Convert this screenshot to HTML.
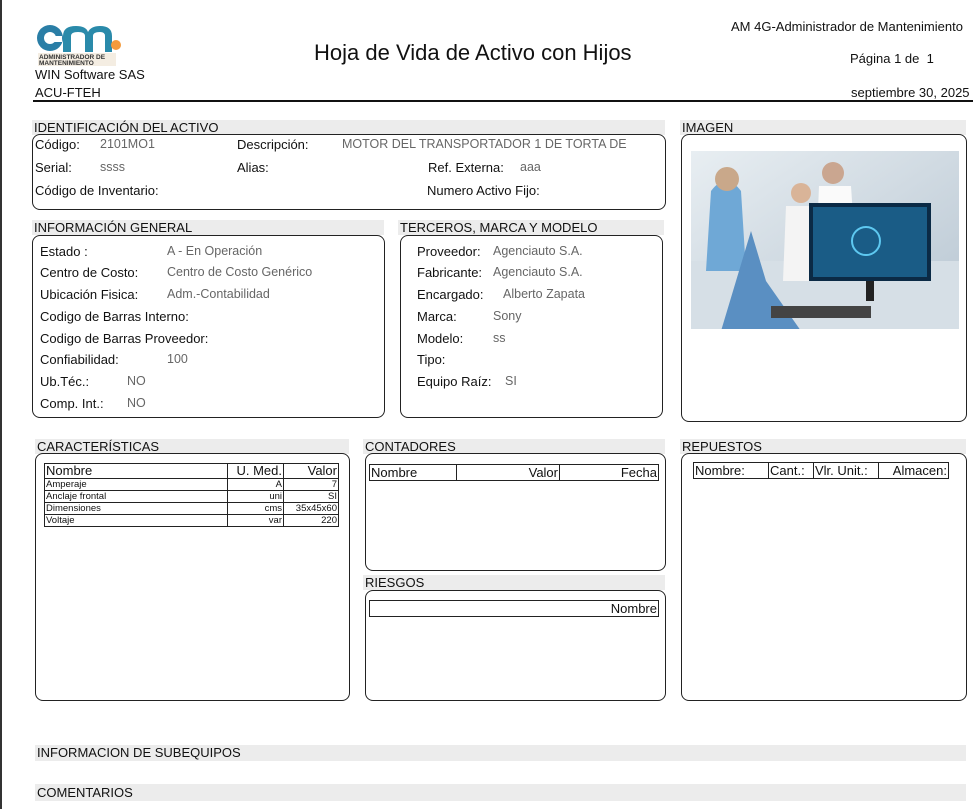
<!DOCTYPE html>
<html><head><meta charset="utf-8"><style>
body{margin:0;width:974px;height:809px;background:#fff;position:relative;overflow:hidden;font-family:"Liberation Sans",sans-serif;color:#111}
.a{position:absolute;white-space:nowrap}
.bar{position:absolute;background:#ececec;font-size:13px;line-height:15px;padding-left:2px;color:#111}
.box{position:absolute;border:1.5px solid #222;border-radius:8px;box-sizing:border-box}
.l{position:absolute;font-size:13px;white-space:nowrap;color:#111}
.v{position:absolute;font-size:12.5px;white-space:nowrap;color:#666}
table{border-collapse:collapse;position:absolute}
td{border:1px solid #222;padding:0 1px;white-space:nowrap}
</style></head><body>
<div class="a" style="left:0;top:0;width:2px;height:809px;background:#333"></div>
<!-- logo -->
<svg class="a" style="left:36px;top:22px" width="88" height="44" viewBox="0 0 88 44">
<circle cx="14" cy="16" r="13" fill="#2a7ea6"/>
<circle cx="14" cy="16" r="6" fill="#fff"/>
<rect x="16" y="14" width="10" height="6" fill="#fff"/>
<path d="M27 30 V14 Q27 4 40 4 Q50 4 52 10 Q55 4 64 4 Q76 4 76 14 V30 H69 V14 Q69 10 64 10 Q57 10 57 14 V30 H49 V14 Q49 10 42 10 Q35 10 35 14 V30 Z" fill="#2a8aaa"/>
<circle cx="80" cy="23" r="5" fill="#f39a3c"/>
<rect x="2" y="31" width="78" height="13" fill="#f4ede2"/>
<text x="3" y="37" font-size="6.5" font-weight="bold" fill="#333" font-family="Liberation Sans">ADMINISTRADOR DE</text>
<text x="3" y="43" font-size="6.5" font-weight="bold" fill="#333" font-family="Liberation Sans">MANTENIMIENTO</text>
</svg>
<div class="a" style="left:35px;top:67px;font-size:13px">WIN Software SAS</div>
<div class="a" style="left:35px;top:85px;font-size:13px">ACU-FTEH</div>
<div class="a" style="left:314px;top:40px;font-size:22px">Hoja de Vida de Activo con Hijos</div>
<div class="a" style="left:731px;top:19px;font-size:13px">AM 4G-Administrador de Mantenimiento</div>
<div class="a" style="left:850px;top:51px;font-size:13px">Página 1 de &nbsp;1</div>
<div class="a" style="left:851px;top:85px;font-size:13px">septiembre 30, 2025</div>
<div class="a" style="left:33px;top:100px;width:940px;height:2px;background:#111"></div>

<div class="bar" style="left:32px;top:120px;width:631px">IDENTIFICACIÓN DEL ACTIVO</div>
<div class="box" style="left:32px;top:134px;width:634px;height:76px"></div>
<div class="l" style="left:35px;top:137px">Código:</div><div class="v" style="left:100px;top:137px">2101MO1</div>
<div class="l" style="left:237px;top:137px">Descripción:</div><div class="v" style="left:342px;top:137px">MOTOR DEL TRANSPORTADOR 1 DE TORTA DE</div>
<div class="l" style="left:35px;top:160px">Serial:</div><div class="v" style="left:100px;top:160px">ssss</div>
<div class="l" style="left:237px;top:160px">Alias:</div>
<div class="l" style="left:428px;top:160px">Ref. Externa:</div><div class="v" style="left:520px;top:160px">aaa</div>
<div class="l" style="left:35px;top:183px">Código de Inventario:</div>
<div class="l" style="left:427px;top:183px">Numero Activo Fijo:</div>

<div class="bar" style="left:680px;top:120px;width:284px">IMAGEN</div>
<div class="box" style="left:681px;top:134px;width:286px;height:288px"></div>
<svg class="a" style="left:691px;top:151px" width="268" height="178" viewBox="0 0 268 178">
<defs><linearGradient id="g" x1="0" y1="0" x2="1" y2="1"><stop offset="0" stop-color="#e8eef2"/><stop offset="1" stop-color="#b8c6d2"/></linearGradient></defs>
<rect width="268" height="178" fill="url(#g)"/>
<rect x="0" y="110" width="268" height="68" fill="#d6dfe6"/>
<path d="M20 40 Q35 20 50 40 L55 120 L15 120 Z" fill="#6fa8d6"/>
<circle cx="36" cy="28" r="12" fill="#c9a88a"/>
<path d="M60 80 L75 130 L110 180 L30 180 Z" fill="#5a8fc2"/>
<circle cx="110" cy="42" r="10" fill="#d9b498"/>
<path d="M95 55 L125 55 L130 130 L92 130 Z" fill="#f4f4f4"/>
<circle cx="142" cy="22" r="11" fill="#caa690"/>
<path d="M128 35 L160 35 L165 110 L125 110 Z" fill="#fafafa"/>
<rect x="118" y="52" width="122" height="78" fill="#0b2a45"/>
<rect x="122" y="56" width="114" height="70" fill="#1a5c86"/>
<circle cx="175" cy="90" r="14" fill="none" stroke="#5ec8f0" stroke-width="2"/>
<rect x="175" y="130" width="8" height="20" fill="#222"/>
<rect x="80" y="155" width="100" height="12" fill="#444"/>
</svg>

<div class="bar" style="left:32px;top:220px;width:350px">INFORMACIÓN GENERAL</div>
<div class="box" style="left:32px;top:235px;width:353px;height:183px"></div>
<div class="l" style="left:40px;top:244px">Estado :</div><div class="v" style="left:167px;top:244px">A - En Operación</div>
<div class="l" style="left:40px;top:265px">Centro de Costo:</div><div class="v" style="left:167px;top:265px">Centro de Costo Genérico</div>
<div class="l" style="left:40px;top:287px">Ubicación Fisica:</div><div class="v" style="left:167px;top:287px">Adm.-Contabilidad</div>
<div class="l" style="left:40px;top:309px">Codigo de Barras Interno:</div>
<div class="l" style="left:40px;top:331px">Codigo de Barras Proveedor:</div>
<div class="l" style="left:40px;top:352px">Confiabilidad:</div><div class="v" style="left:167px;top:352px">100</div>
<div class="l" style="left:40px;top:374px">Ub.Téc.:</div><div class="v" style="left:127px;top:374px">NO</div>
<div class="l" style="left:40px;top:396px">Comp. Int.:</div><div class="v" style="left:127px;top:396px">NO</div>

<div class="bar" style="left:398px;top:220px;width:264px">TERCEROS, MARCA Y MODELO</div>
<div class="box" style="left:400px;top:235px;width:263px;height:183px"></div>
<div class="l" style="left:417px;top:244px">Proveedor:</div><div class="v" style="left:493px;top:244px">Agenciauto S.A.</div>
<div class="l" style="left:417px;top:265px">Fabricante:</div><div class="v" style="left:493px;top:265px">Agenciauto S.A.</div>
<div class="l" style="left:417px;top:287px">Encargado:</div><div class="v" style="left:503px;top:287px">Alberto Zapata</div>
<div class="l" style="left:417px;top:309px">Marca:</div><div class="v" style="left:493px;top:309px">Sony</div>
<div class="l" style="left:417px;top:331px">Modelo:</div><div class="v" style="left:493px;top:331px">ss</div>
<div class="l" style="left:417px;top:352px">Tipo:</div>
<div class="l" style="left:417px;top:374px">Equipo Raíz:</div><div class="v" style="left:505px;top:374px">SI</div>

<div class="bar" style="left:35px;top:439px;width:312px">CARACTERÍSTICAS</div>
<div class="box" style="left:35px;top:453px;width:315px;height:248px"></div>
<table style="left:44px;top:463px;width:295px;font-size:9.5px;line-height:11px">
<tr style="font-size:13px;line-height:14px"><td style="width:180px">Nombre</td><td style="text-align:right">U. Med.</td><td style="text-align:right;width:52px">Valor</td></tr>
<tr><td>Amperaje</td><td style="text-align:right">A</td><td style="text-align:right">7</td></tr>
<tr><td>Anclaje frontal</td><td style="text-align:right">uni</td><td style="text-align:right">SI</td></tr>
<tr><td>Dimensiones</td><td style="text-align:right">cms</td><td style="text-align:right">35x45x60</td></tr>
<tr><td>Voltaje</td><td style="text-align:right">var</td><td style="text-align:right">220</td></tr>
</table>

<div class="bar" style="left:363px;top:439px;width:300px">CONTADORES</div>
<div class="box" style="left:365px;top:453px;width:301px;height:118px"></div>
<table style="left:369px;top:464px;width:290px;font-size:13px;line-height:15px">
<tr><td style="width:84px">Nombre</td><td style="text-align:right;width:100px">Valor</td><td style="text-align:right">Fecha</td></tr></table>

<div class="bar" style="left:363px;top:575px;width:300px">RIESGOS</div>
<div class="box" style="left:365px;top:590px;width:301px;height:111px"></div>
<table style="left:369px;top:600px;width:290px;font-size:13px;line-height:15px">
<tr><td style="text-align:right">Nombre</td></tr></table>

<div class="bar" style="left:680px;top:439px;width:284px">REPUESTOS</div>
<div class="box" style="left:681px;top:453px;width:286px;height:248px"></div>
<table style="left:693px;top:462px;width:256px;font-size:13px;line-height:15px;table-layout:fixed">
<tr><td style="width:72px">Nombre:</td><td style="width:42px;overflow:hidden">Cant.:</td><td style="width:62px;overflow:hidden">Vlr. Unit.:</td><td style="text-align:right;overflow:hidden">Almacen:</td></tr></table>

<div class="bar" style="left:35px;top:745px;width:929px;height:16px;line-height:16px">INFORMACION DE SUBEQUIPOS</div>
<div class="bar" style="left:35px;top:784px;width:929px;height:17px;line-height:17px">COMENTARIOS</div>
</body></html>
